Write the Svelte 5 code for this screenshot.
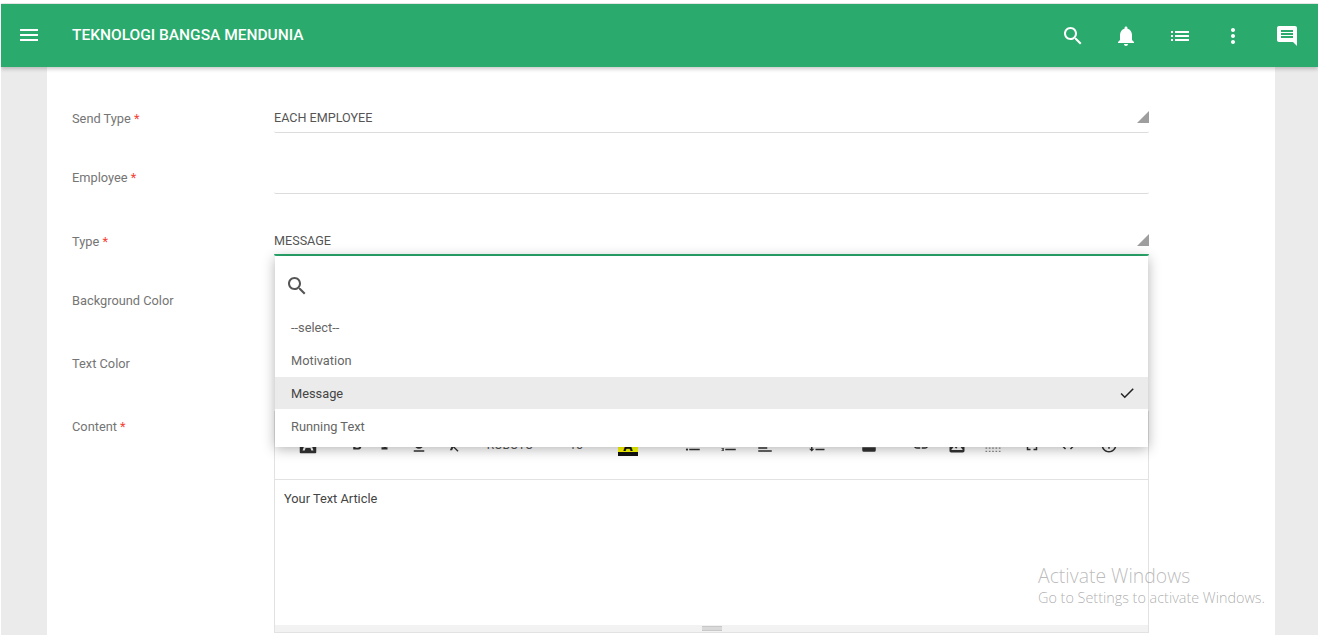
<script>
	const d = {
		menu: 'M3 18h18v-2H3v2zm0-5h18v-2H3v2zm0-7v2h18V6H3z',
		search: 'M15.5 14h-.79l-.28-.27C15.41 12.59 16 11.11 16 9.5 16 5.91 13.09 3 9.5 3S3 5.91 3 9.5 5.91 16 9.5 16c1.61 0 3.09-.59 4.23-1.57l.27.28v.79l5 4.99L20.49 19l-4.99-5zm-6 0C7.01 14 5 11.99 5 9.5S7.01 5 9.5 5 14 7.01 14 9.5 11.99 14 9.5 14z',
		bell: 'M12 22c1.1 0 2-.9 2-2h-4c0 1.1.89 2 2 2zm6-6v-5c0-3.07-1.64-5.64-4.5-6.32V4c0-.83-.67-1.5-1.5-1.5s-1.5.67-1.5 1.5v.68C7.63 5.36 6 7.92 6 11v5l-2 2v1h16v-1l-2-2z',
		list: 'M3 13h2v-2H3v2zm0 4h2v-2H3v2zm0-8h2V7H3v2zm4 4h14v-2H7v2zm0 4h14v-2H7v2zM7 7v2h14V7H7z',
		more: 'M12 8c1.1 0 2-.9 2-2s-.9-2-2-2-2 .9-2 2 .9 2 2 2zm0 2c-1.1 0-2 .9-2 2s.9 2 2 2 2-.9 2-2-.9-2-2-2zm0 6c-1.1 0-2 .9-2 2s.9 2 2 2 2-.9 2-2-.9-2-2-2z',
		chat: 'M21.99 4c0-1.1-.89-2-1.99-2H4c-1.1 0-2 .9-2 2v12c0 1.1.9 2 2 2h14l4 4-.01-18zM18 14H6v-2h12v2zm0-3H6V9h12v2zm0-3H6V6h12v2z',
		check: 'M9 16.17L4.83 12l-1.41 1.41L9 19 21 7l-1.41-1.41z'
	}

	const topIcons = ['search', 'bell', 'list', 'more', 'chat']

	// c = centre of the tool on the page, w = width of its cell
	const tools = [
		{ c: 308, w: 22, s: 22, p: 'M4 3h16a1 1 0 0 1 1 1v16a1 1 0 0 1-1 1H4a1 1 0 0 1-1-1V4a1 1 0 0 1 1-1zM10.5 6L6 18h2.4l1-2.8h5.2l1 2.8H18L13.5 6h-3zm1.5 3l1.8 4.4h-3.6L12 9z' },
		{ c: 357, w: 18, p: 'M15.6 10.79c.97-.67 1.65-1.77 1.65-2.79 0-2.26-1.75-4-4-4H7v14h7.04c2.09 0 3.71-1.7 3.71-3.79 0-1.52-.86-2.82-2.15-3.42zM10 6.5h3c.83 0 1.5.67 1.5 1.5s-.67 1.5-1.5 1.5h-3v-3zm3.5 9H10v-3h3.5c.83 0 1.5.67 1.5 1.5s-.67 1.5-1.5 1.5z' },
		{ c: 386, w: 18, p: 'M10 4v3h2.21l-3.42 8H6v3h8v-3h-2.21l3.42-8H18V4z' },
		{ c: 419, w: 18, p: 'M12 17c3.31 0 6-2.69 6-6V3h-2.5v8c0 1.93-1.57 3.5-3.5 3.5S8.5 12.93 8.5 11V3H6v8c0 3.31 2.69 6 6 6zm-7 2v2h14v-2H5z' },
		{ c: 454, w: 18, p: 'M3.27 5L2 6.27l6.97 6.97L6.5 19h3l1.57-3.66L16.73 21 18 19.73 3.55 5.27 3.27 5zM6 5v.18L8.82 8h2.4l-.72 1.68 2.1 2.1L14.21 8H20V5H6z' },
		{ c: 510, w: 60, text: 'ROBOTO' },
		{ c: 576, w: 24, text: '15' },
		{ c: 628, w: 20, mark: 'A' },
		{ c: 693, w: 18, p: 'M4 10.5c-.83 0-1.5.67-1.5 1.5s.67 1.5 1.5 1.5 1.5-.67 1.5-1.5-.67-1.5-1.5-1.5zm0-6c-.83 0-1.5.67-1.5 1.5S3.17 7.5 4 7.5 5.5 6.83 5.5 6 4.83 4.5 4 4.5zm0 12c-.83 0-1.5.68-1.5 1.5s.68 1.5 1.5 1.5 1.5-.68 1.5-1.5-.67-1.5-1.5-1.5zM7 19h14v-2H7v2zm0-6h14v-2H7v2zm0-8v2h14V5H7z' },
		{ c: 729, w: 18, p: 'M2 17h2v.5H3v1h1v.5H2v1h3v-4H2v1zm1-9h1V4H2v1h1v3zm-1 3h1.8L2 13.1v.9h3v-1H3.2L5 10.9V10H2v1zm5-6v2h14V5H7zm0 14h14v-2H7v2zm0-6h14v-2H7v2z' },
		{ c: 765, w: 18, p: 'M15 15H3v2h12v-2zm0-8H3v2h12V7zM3 13h18v-2H3v2zm0 8h18v-2H3v2zM3 3v2h18V3H3z' },
		{ c: 817, w: 18, p: 'M6 7h2.5L5 3.5 1.5 7H4v10H1.5L5 20.5 8.5 17H6V7zm4-2v2h12V5H10zm0 14h12v-2H10v2zm0-6h12v-2H10v2z' },
		{ c: 869, w: 18, p: 'M5 3h14a2 2 0 0 1 2 2v3H3V5a2 2 0 0 1 2-2zM3 10h18v3H3zM3 15h18v4a2 2 0 0 1-2 2H5a2 2 0 0 1-2-2z' },
		{ c: 921, w: 18, p: 'M3.9 12c0-1.71 1.39-3.1 3.1-3.1h4V7H7c-2.76 0-5 2.24-5 5s2.24 5 5 5h4v-1.9H7c-1.71 0-3.1-1.39-3.1-3.1zM8 13h8v-2H8v2zm9-6h-4v1.9h4c1.71 0 3.1 1.39 3.1 3.1s-1.39 3.1-3.1 3.1h-4V17h4c2.76 0 5-2.24 5-5s-2.24-5-5-5z' },
		{ c: 957, w: 18, s: 20, p: 'M21 19V5c0-1.1-.9-2-2-2H5c-1.1 0-2 .9-2 2v14c0 1.1.9 2 2 2h14c1.1 0 2-.9 2-2zM8.5 13.5l2.5 3.01L14.5 12l4.5 6H5l3.5-4.5z' },
		{ c: 993, w: 18, s: 20, f: '#8a8a8a', p: 'M3 3h2v2H3zM7 3h2v2H7zM11 3h2v2h-2zM15 3h2v2h-2zM19 3h2v2h-2zM3 15h2v1.500H3zM7 15h2v1.500H7zM11 15h2v1.500h-2zM15 15h2v1.500h-2zM19 15h2v1.500h-2zM3 19h2v1.500H3zM7 19h2v1.500H7zM11 19h2v1.500h-2zM15 19h2v1.500h-2zM19 19h2v1.500h-2z' },
		{ c: 1032, w: 18, p: 'M7 14H5v5h5v-2H7v-3zm-2-4h2V7h3V5H5v5zm12 7h-3v2h5v-5h-2v3zM14 5v2h3v3h2V5h-5z' },
		{ c: 1068, w: 18, p: 'M9.400 16.600L4.800 12l4.600-4.600L8 6l-6 6 6 6 1.400-1.400zm5.200 0l4.600-4.600-4.600-4.600L16 6l6 6-6 6-1.400-1.400z' },
		{ c: 1109, w: 18, p: 'M11 7h2v2h-2zm0 4h2v6h-2zm1-9C6.480 2 2 6.480 2 12s4.480 10 10 10 10-4.480 10-10S17.520 2 12 2zm0 18c-4.410 0-8-3.590-8-8s3.590-8 8-8 8 3.590 8 8-3.590 8-8 8z' }
	]

	// toolbar starts right of the editor border at x=275
	let x = 275
	const placed = tools.map((t) => {
		const left = t.c - t.w / 2
		const gap = left - x
		x = left + t.w
		return { ...t, gap }
	})

	const options = ['--select--', 'Motivation', 'Message', 'Running Text']
</script>

<div class="page">
	<header>
		<svg class="burger" viewBox="0 0 24 24"><path d={d.menu} /></svg>
		<span class="title">TEKNOLOGI BANGSA MENDUNIA</span>
		<div class="actions">
			{#each topIcons as name}
				<svg viewBox="0 0 24 24"><path d={d[name]} /></svg>
			{/each}
		</div>
	</header>

	<main class="card">
		<div class="row r1">
			<span class="label">Send Type <b>*</b></span>
			<div class="field"><span>EACH EMPLOYEE</span><i class="arrow"></i></div>
		</div>
		<div class="row r2">
			<span class="label">Employee <b>*</b></span>
			<div class="field"></div>
		</div>
		<div class="row r3">
			<span class="label">Type <b>*</b></span>
			<div class="field open">
				<span>MESSAGE</span><i class="arrow"></i>
				<div class="dropdown">
					<div class="find">
						<svg viewBox="0 0 24 24"><path d={d.search} /></svg>
					</div>
					{#each options as opt}
						<div class="opt" class:sel={opt === 'Message'}>
							{opt}
							{#if opt === 'Message'}
								<svg viewBox="0 0 24 24"><path d={d.check} /></svg>
							{/if}
						</div>
					{/each}
				</div>
			</div>
		</div>
		<div class="row r4">
			<span class="label">Background Color</span>
		</div>
		<div class="row r5">
			<span class="label">Text Color</span>
		</div>
		<div class="row r6">
			<span class="label">Content <b>*</b></span>
			<div class="editor">
				<div class="toolbar">
					{#each placed as t}
						<div class="tool" style="width:{t.w}px;margin-left:{t.gap}px">
							{#if t.text}
								<span class="tool-text">{t.text}</span>
							{:else if t.mark}
								<span class="mark">{t.mark}</span>
							{:else}
								<svg style="width:{t.s || 18}px;height:{t.s || 18}px" fill={t.f || '#333'} viewBox="0 0 24 24"><path fill-rule="evenodd" d={t.p} /></svg>
							{/if}
						</div>
					{/each}
				</div>
				<div class="body">Your Text Article</div>
				<div class="status"><i></i></div>
			</div>
		</div>
	</main>

	<div class="activate">
		<div class="a1">Activate Windows</div>
		<div class="a2">Go to Settings to activate Windows.</div>
	</div>
</div>

<style>
	:global(body) {
		background: #fff;
	}
	.page {
		position: relative;
		height: 631px;
		padding-top: 1px;
		border-top: 3px solid #fff;
		border-left: 1px solid #fff;
		background: #ebebeb;
		overflow: hidden;
		font-family: Roboto, 'Liberation Sans', sans-serif;
	}
	header {
		position: relative;
		z-index: 5;
		display: flex;
		align-items: center;
		height: 63px;
		background: #2aaa6d;
		color: #fff;
		box-shadow: 0 2px 4px rgba(0, 0, 0, 0.22);
	}
	header svg {
		width: 24px;
		height: 24px;
		fill: #fff;
	}
	.burger {
		margin: 0 0 2px 16px;
	}
	.title {
		margin: 0 0 1px 31px;
		font-size: 15.500px;
		font-weight: 500;
	}
	.actions {
		display: flex;
		gap: 29.500px;
		margin-left: auto;
		padding-right: 19.500px;
	}
	.card {
		box-sizing: border-box;
		width: 1228px;
		height: 568px;
		margin-left: 46px;
		padding: 36px 0 0 25px;
		background: #fff;
	}
	.row {
		display: flex;
		align-items: center;
		height: 30px;
		font-size: 12.800px;
	}
	.r2 {
		height: 33px;
		margin-top: 28px;
	}
	.r3 {
		margin-top: 32px;
	}
	.r4 {
		margin-top: 29px;
	}
	.r5,
	.r6 {
		margin-top: 33px;
	}
	.r6 {
		align-items: flex-start;
		height: auto;
	}
	.label {
		flex: 0 0 202px;
		padding-top: 2px;
		color: #757575;
		line-height: 30px;
	}
	.r2 .label {
		padding-top: 0;
	}
	.r6 .label {
		padding-top: 1px;
	}
	.label b {
		color: #f44336;
		font-weight: 400;
	}
	.field {
		position: relative;
		box-sizing: border-box;
		width: 875px;
		height: 100%;
		border-bottom: 1px solid #dcdcdc;
		border-radius: 0 0 2px 2px;
		color: #555;
		font-size: 12.600px;
		line-height: 29px;
	}
	.field.open {
		border-bottom: 2px solid #2aaa6d;
	}
	.arrow {
		position: absolute;
		right: 0;
		top: 8px;
		width: 12px;
		height: 12px;
		background: #9e9e9e;
		clip-path: polygon(100% 0, 100% 100%, 0 100%);
	}
	.dropdown {
		position: absolute;
		z-index: 3;
		top: 30px;
		left: 1px;
		width: 873px;
		height: 191px;
		background: #fff;
		box-shadow: 0 2px 12px rgba(0, 0, 0, 0.3);
		font-size: 12.800px;
	}
	.find {
		height: 55px;
	}
	.find svg {
		display: block;
		width: 24px;
		height: 24px;
		padding: 18px 0 0 10px;
		fill: #555;
	}
	.opt {
		display: flex;
		align-items: center;
		justify-content: space-between;
		height: 33px;
		padding: 0 9px 0 16px;
		color: #666;
		line-height: 33px;
	}
	.opt.sel {
		height: 32px;
		margin-bottom: 1px;
		background: #ebebeb;
		color: #444;
	}
	.opt svg {
		width: 24px;
		height: 24px;
		fill: #222;
		transform: scale(0.75);
	}
	.editor {
		display: flex;
		flex-direction: column;
		box-sizing: border-box;
		width: 875px;
		height: 222px;
		border: 1px solid #e2e2e2;
		border-top: 0;
	}
	.toolbar {
		display: flex;
		flex: 0 0 69px;
		align-items: center;
		box-sizing: border-box;
		border-bottom: 1px solid #e2e2e2;
	}
	.tool {
		display: flex;
		flex: none;
		align-items: center;
		justify-content: center;
	}
	.tool svg {
		flex: none;
	}
	.tool-text {
		color: #555;
		font-size: 12px;
	}
	.mark {
		box-sizing: border-box;
		flex: none;
		width: 20px;
		height: 22px;
		border-bottom: 4px solid #111;
		background: #ffff00;
		color: #111;
		font-size: 14px;
		font-weight: 700;
		line-height: 24px;
		text-align: center;
		overflow: hidden;
	}
	.body {
		flex: 1;
		padding: 10px 9px;
		color: #444;
		line-height: 18px;
	}
	.status {
		display: flex;
		flex: 0 0 7px;
		justify-content: center;
		background: #f2f2f2;
	}
	.status i {
		box-sizing: border-box;
		width: 20px;
		height: 5px;
		margin-top: 1px;
		border-top: 1px solid #c8c8c8;
		border-bottom: 1px solid #c8c8c8;
		background: #d9d9d9;
	}
	.activate {
		position: absolute;
		z-index: 9;
		left: 1037px;
		top: 561px;
		color: rgba(130, 130, 130, 0.55);
		font-family: 'Open Sans', sans-serif;
		font-weight: 300;
		white-space: nowrap;
	}
	.a1 {
		font-size: 19.400px;
		line-height: 23px;
	}
	.a2 {
		font-size: 14.400px;
		line-height: 21px;
		color: rgba(130, 130, 130, 0.65);
	}
</style>
